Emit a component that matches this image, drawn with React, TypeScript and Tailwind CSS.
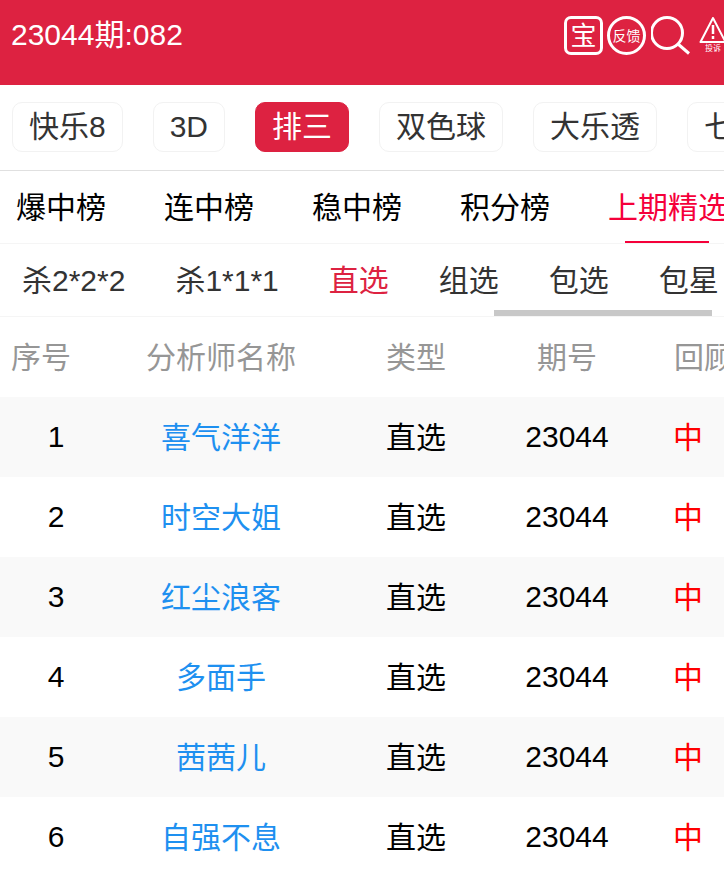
const chips = ['快乐8', '3D', '排三', '双色球', '大乐透', '七星彩']
const tabs = ['爆中榜', '连中榜', '稳中榜', '积分榜', '上期精选']
const subTabs = ['杀2*2*2', '杀1*1*1', '直选', '组选', '包选', '包星']
const rows = [
  { id: 1, name: '喜气洋洋' },
  { id: 2, name: '时空大姐' },
  { id: 3, name: '红尘浪客' },
  { id: 4, name: '多面手' },
  { id: 5, name: '茜茜儿' },
  { id: 6, name: '自强不息' },
]

const HeaderIcons = () => (
  <div className="flex items-start shrink-0 mt-[1px]">
    <div className="w-[39px] h-[39px] border-[3px] border-white rounded-[7px] flex items-center justify-center text-[26px] leading-none text-white">宝</div>
    <div className="ml-[4px] w-[39px] h-[39px] border-[3px] border-white rounded-full flex items-center justify-center text-[14px] leading-none text-white whitespace-nowrap">反馈</div>
    <svg className="ml-[5px] shrink-0" width="41" height="41" viewBox="0 0 41 41" fill="none" stroke="white">
      <circle cx="16" cy="17" r="15.5" strokeWidth="3" />
      <path d="M27 28L38 37.5" strokeWidth="3" />
    </svg>
    <div className="ml-[7px] w-[28px] shrink-0 flex flex-col items-center">
      <svg width="28" height="28" viewBox="0 0 28 28" fill="none" stroke="white">
        <path d="M14 2L1.5 26H26.5Z" strokeWidth="2" strokeLinejoin="round" />
        <path d="M14 9V18M14 20V23" strokeWidth="2.5" />
      </svg>
      <span className="text-[8px] leading-[10px] text-white whitespace-nowrap">投诉</span>
    </div>
  </div>
)

export default function App() {
  return (
    <div className="w-[724px] h-[871px] overflow-hidden bg-white font-['Liberation_Sans','Noto_Sans_CJK_SC',sans-serif]">
      <header className="h-[85px] bg-[#dd2241] flex justify-between pl-[11px] pt-[15px]">
        <div className="text-[30px] leading-[40px] text-white whitespace-nowrap">23044期:082</div>
        <div className="w-[160px] overflow-hidden flex items-start shrink-0">
          <HeaderIcons />
        </div>
      </header>

      <div className="h-[86px] border-b border-[#e0e0e0] flex items-start gap-[30px] pl-[12px] pt-[17px] overflow-hidden">
        {chips.map((chip) => (
          <div
            key={chip}
            className={
              chip === '排三'
                ? 'h-[50px] shrink-0 px-[16px] rounded-[10px] border border-[#dd2241] bg-[#dd2241] text-white text-[30px] leading-[48px]'
                : 'h-[50px] shrink-0 px-[16px] rounded-[10px] border border-[#f2f2f2] text-[#333] text-[30px] leading-[48px]'
            }
          >
            {chip}
          </div>
        ))}
      </div>

      <div className="h-[73px] border-b border-[#f5f5f5] flex gap-[58px] pl-[16px] overflow-hidden">
        {tabs.map((tab) => (
          <div key={tab} className={tab === '上期精选' ? 'relative shrink-0 text-[30px] leading-[73px] text-[#f5003a]' : 'shrink-0 text-[30px] leading-[73px] text-black'}>
            {tab}
            {tab === '上期精选' && <div className="absolute left-[17px] top-[70px] w-[84px] h-[2px] bg-[#f5003a]" />}
          </div>
        ))}
      </div>

      <div className="relative h-[73px] border-b border-[#f5f5f5] flex gap-[50px] pl-[22px] overflow-hidden">
        {subTabs.map((tab) => (
          <div key={tab} className={tab === '直选' ? 'shrink-0 text-[30px] leading-[73px] text-[#dd2241]' : 'shrink-0 text-[30px] leading-[73px] text-[#333]'}>
            {tab}
          </div>
        ))}
        <div className="absolute left-[494px] bottom-0 w-[218px] h-[6px] bg-[#c8c8c8]" />
      </div>

      <div className="w-[744px]">
        <div className="grid grid-cols-[112px_220px_170px_130px_112px] h-[80px] items-center text-[30px] text-[#969696]">
          <div className="pl-[11px]">序号</div>
          <div className="text-center pr-[2px]">分析师名称</div>
          <div className="text-center pr-[2px]">类型</div>
          <div className="text-center">期号</div>
          <div className="pl-[42px] whitespace-nowrap">回顾</div>
        </div>
        {rows.map((row) => (
          <div key={row.id} className="grid grid-cols-[112px_220px_170px_130px_112px] h-[80px] items-center text-center text-[30px] text-black even:bg-[#f9f9f9]">
            <div className="pb-[2px]">{row.id}</div>
            <div className="text-[#1e90f0] pr-[2px]">{row.name}</div>
            <div className="pr-[2px]">直选</div>
            <div className="pb-[2px]">23044</div>
            <div className="text-[#f00]">中</div>
          </div>
        ))}
      </div>
    </div>
  )
}
